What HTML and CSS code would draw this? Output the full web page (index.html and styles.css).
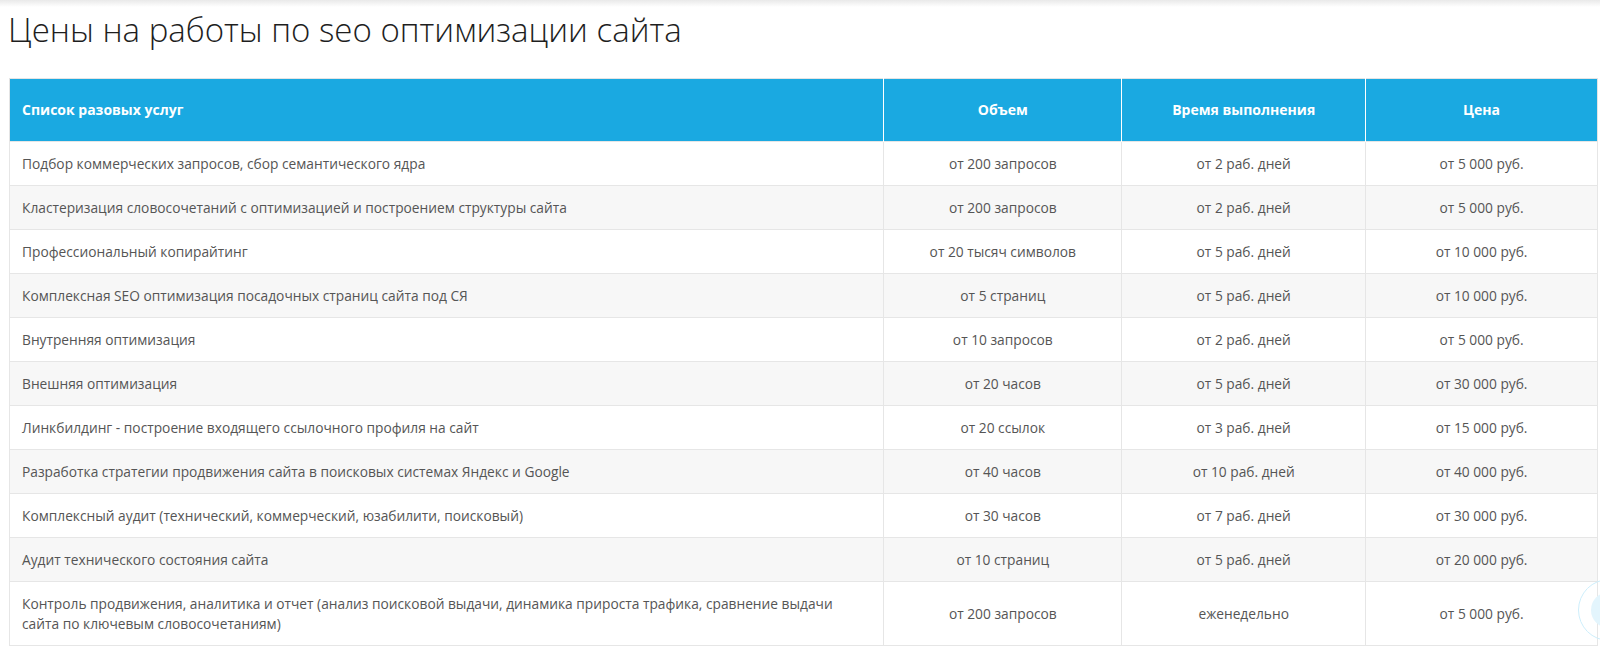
FILE: index.html
```html
<!DOCTYPE html>
<html lang="ru">
<head>
<meta charset="utf-8">
<title>Цены на работы по seo оптимизации сайта</title>
<link rel="stylesheet" href="styles.css">
</head>
<body>
<div class="topshade"></div>
<main class="page">
  <h1 class="title">Цены на работы по seo оптимизации сайта</h1>
  <table class="prices">
    <colgroup>
      <col class="c1"><col class="c2"><col class="c3"><col class="c4">
    </colgroup>
    <thead>
      <tr>
        <th class="left">Список разовых услуг</th>
        <th>Объем</th>
        <th>Время выполнения</th>
        <th>Цена</th>
      </tr>
    </thead>
    <tbody>
      <tr><td class="left">Подбор коммерческих запросов, сбор семантического ядра</td><td>от 200 запросов</td><td>от 2 раб. дней</td><td>от 5 000 руб.</td></tr>
      <tr><td class="left">Кластеризация словосочетаний с оптимизацией и построением структуры сайта</td><td>от 200 запросов</td><td>от 2 раб. дней</td><td>от 5 000 руб.</td></tr>
      <tr><td class="left">Профессиональный копирайтинг</td><td>от 20 тысяч символов</td><td>от 5 раб. дней</td><td>от 10 000 руб.</td></tr>
      <tr><td class="left">Комплексная SEO оптимизация посадочных страниц сайта под СЯ</td><td>от 5 страниц</td><td>от 5 раб. дней</td><td>от 10 000 руб.</td></tr>
      <tr><td class="left">Внутренняя оптимизация</td><td>от 10 запросов</td><td>от 2 раб. дней</td><td>от 5 000 руб.</td></tr>
      <tr><td class="left">Внешняя оптимизация</td><td>от 20 часов</td><td>от 5 раб. дней</td><td>от 30 000 руб.</td></tr>
      <tr><td class="left">Линкбилдинг - построение входящего ссылочного профиля на сайт</td><td>от 20 ссылок</td><td>от 3 раб. дней</td><td>от 15 000 руб.</td></tr>
      <tr><td class="left">Разработка стратегии продвижения сайта в поисковых системах Яндекс и Google</td><td>от 40 часов</td><td>от 10 раб. дней</td><td>от 40 000 руб.</td></tr>
      <tr><td class="left">Комплексный аудит (технический, коммерческий, юзабилити, поисковый)</td><td>от 30 часов</td><td>от 7 раб. дней</td><td>от 30 000 руб.</td></tr>
      <tr><td class="left">Аудит технического состояния сайта</td><td>от 10 страниц</td><td>от 5 раб. дней</td><td>от 20 000 руб.</td></tr>
      <tr><td class="left">Контроль продвижения, аналитика и отчет (анализ поисковой выдачи, динамика прироста трафика, сравнение выдачи сайта по ключевым словосочетаниям)</td><td>от 200 запросов</td><td>еженедельно</td><td>от 5 000 руб.</td></tr>
    </tbody>
  </table>
</main>
<div class="callback"><span class="callback-core"></span></div>
</body>
</html>
```

FILE: styles.css
```css
html, body {
  margin: 0;
  padding: 0;
  background: #ffffff;
}
body {
  font-family: "Open Sans", "Liberation Sans", sans-serif;
  color: #555555;
  overflow: hidden;
}
.topshade {
  height: 7px;
  background: linear-gradient(to bottom, #e9e9e9, #ffffff);
}
.page {
  padding: 0 2px 0 9px;
}
.title {
  margin: 0 0 0 -1px;
  padding-top: 3px;
  font-size: 33px;
  line-height: 40px;
  font-weight: 300;
  color: #1e1e1e;
  letter-spacing: 0;
}
.prices {
  margin-top: 28px;
  width: 1589px;
  border-collapse: collapse;
  border: 1px solid #e4e4e4;
  font-size: 13.75px;
  line-height: 20px;
}
.c1 { width: 875px; }
.c2 { width: 238px; }
.c3 { width: 244px; }
.c4 { width: 232px; }
.prices th {
  background: #1aa9e1;
  color: #ffffff;
  font-weight: 700;
  font-size: 14px;
  height: 63px;
  padding: 0 12px;
  text-align: center;
  border-left: 1px solid #ffffff;
  box-sizing: border-box;
}
.prices th:first-child {
  border-left: none;
}
.prices td {
  padding: 12px 12px 11px;
  text-align: center;
  border: 1px solid #e6e6e6;
  color: #555555;
}
.prices .left {
  text-align: left;
}
.prices tbody tr:nth-child(even) td {
  background: #f7f7f7;
}
.callback {
  position: fixed;
  left: 1578px;
  top: 579px;
  width: 60px;
  height: 60px;
  border-radius: 50%;
  border: 1px solid #cdeefb;
  display: flex;
  align-items: center;
  justify-content: center;
}
.callback-core {
  width: 36px;
  height: 36px;
  border-radius: 50%;
  background: #e3f5fd;
}
```
